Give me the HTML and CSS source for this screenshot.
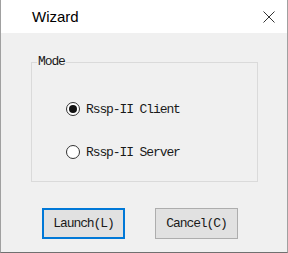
FILE: index.html
```html
<!DOCTYPE html>
<html lang="en">
<head>
  <meta charset="UTF-8" />
  <title>Wizard</title>
  <link rel="stylesheet" href="styles.css">
</head>
<body>
  <div class="janela">
    <div class="titulo">
      <span class="titulo-texto">Wizard</span>
      <svg class="fechar" width="12" height="12" viewBox="0 0 12 12">
        <path d="M0.5 0.5 L11.5 11.5 M11.5 0.5 L0.5 11.5" stroke="#333" stroke-width="1" fill="none" />
      </svg>
    </div>

    <div class="conteudo">
      <div class="grupo">
        <span class="legenda">Mode</span>
        <label class="opcao">
          <input type="radio" name="modo" checked />
          <span>Rssp-II Client</span>
        </label>
        <label class="opcao">
          <input type="radio" name="modo" />
          <span>Rssp-II Server</span>
        </label>
      </div>

      <div class="botoes">
        <button class="padrao">Launch(L)</button>
        <button>Cancel(C)</button>
      </div>
    </div>
  </div>
</body>
</html>
```

FILE: styles.css
```css
body {
  margin: 0;
  background-color: #fff;
}

.janela {
  width: 288px;
  height: 253px;
  box-sizing: border-box;
  border: 1px solid #a0a0a0;
  border-top: none;
  border-bottom-color: #707070;
  background-color: #f0f0f0;
  font-family: "Liberation Mono", monospace;
  font-size: 13px;
  letter-spacing: -1.1px;
  color: #1a1a1a;
}

.titulo {
  height: 33px;
  background-color: #fff;
  display: flex;
  align-items: center;
  padding-left: 31px;
  padding-right: 12px;
}

.titulo-texto {
  flex: 1;
  font-family: "Liberation Sans", sans-serif;
  font-size: 15px;
  letter-spacing: 0;
  color: #000;
}

.conteudo {
  padding: 29px 0 0 30px;
}

.grupo {
  position: relative;
  width: 227px;
  height: 120px;
  box-sizing: border-box;
  border: 1px solid #dadada;
  padding: 36px 0 0 34px;
  display: flex;
  flex-direction: column;
  gap: 23px;
}

.legenda {
  position: absolute;
  top: -9px;
  left: 5px;
  padding: 0 1px;
  background-color: #f0f0f0;
  line-height: 16px;
}

.opcao {
  display: flex;
  align-items: center;
  height: 20px;
  gap: 6px;
}

.opcao input {
  appearance: none;
  margin: 0;
  width: 14px;
  height: 14px;
  border: 1px solid #333;
  border-radius: 50%;
  background-color: #fff;
  display: flex;
  align-items: center;
  justify-content: center;
}

.opcao input:checked::after {
  content: "";
  width: 8px;
  height: 8px;
  border-radius: 50%;
  background-color: #111;
}

.botoes {
  display: flex;
  gap: 30px;
  margin-top: 26px;
  padding-left: 11px;
}

button {
  width: 83px;
  height: 31px;
  box-sizing: border-box;
  background-color: #e1e1e1;
  border: 1px solid #adadad;
  font-family: "Liberation Mono", monospace;
  font-size: 13px;
  letter-spacing: -1.1px;
  color: #1a1a1a;
  padding: 0;
}

button.padrao {
  border: 2px solid #0078d7;
}
```
